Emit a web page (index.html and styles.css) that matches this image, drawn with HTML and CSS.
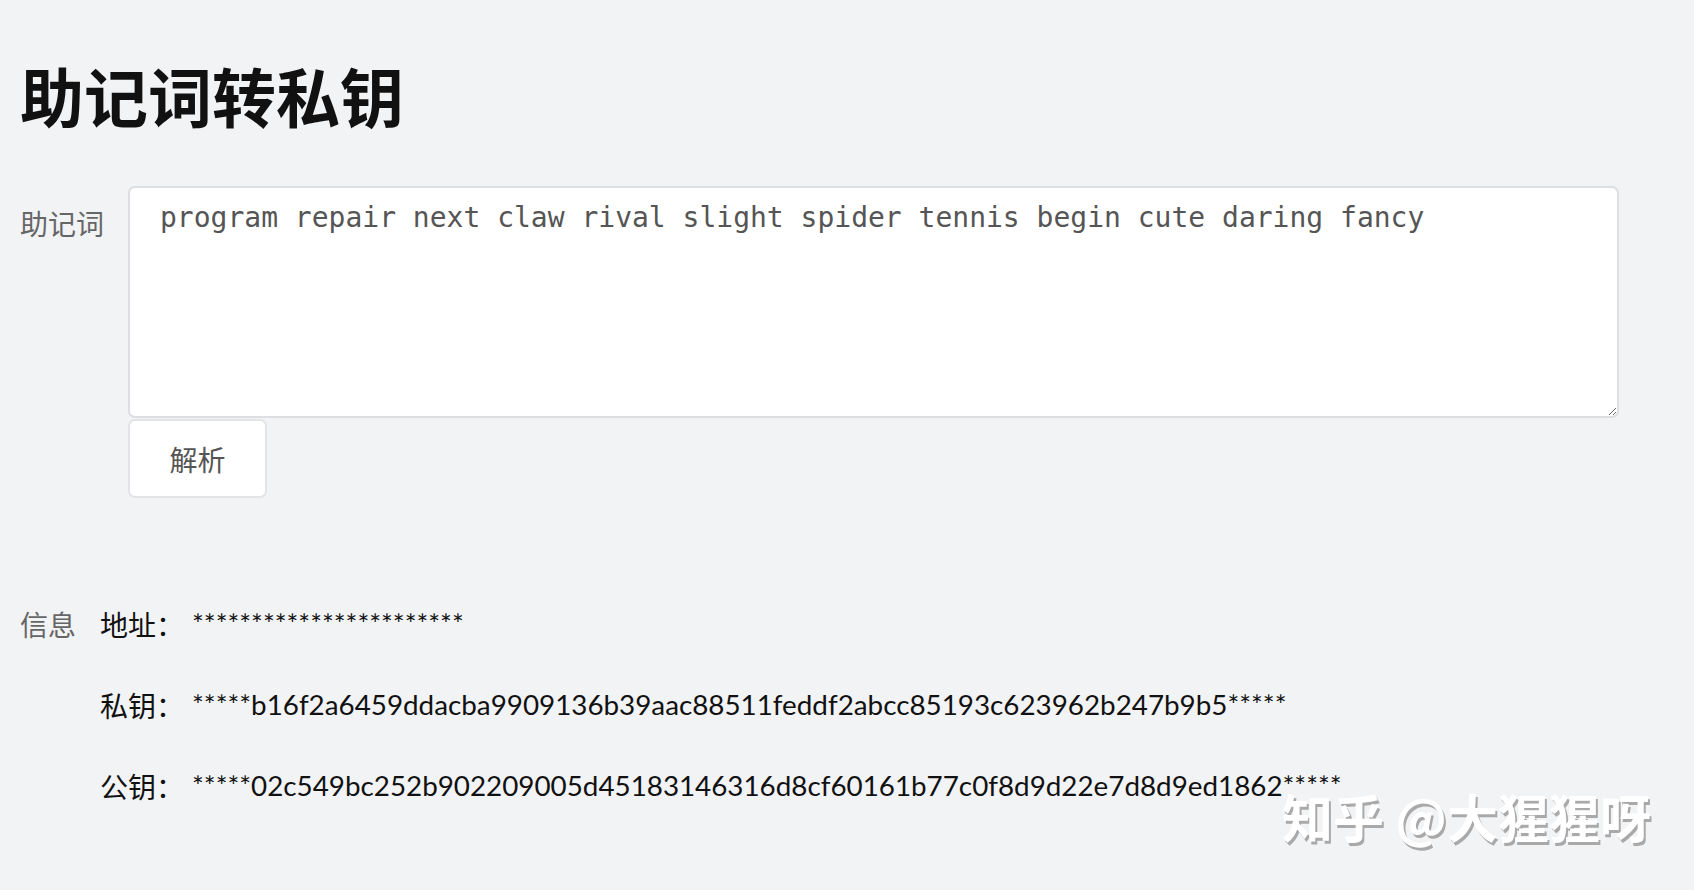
FILE: index.html
```html
<!DOCTYPE html>
<html lang="zh-CN">
<head>
<meta charset="utf-8">
<title>助记词转私钥</title>
<link rel="stylesheet" href="styles.css">
</head>
<body>
<main class="page">
  <h1 class="title">助记词转私钥</h1>
  <section class="form-row">
    <label class="form-label" for="mnemonic">助记词</label>
    <div class="form-control">
      <textarea id="mnemonic" class="mnemonic">program repair next claw rival slight spider tennis begin cute daring fancy</textarea>
      <button class="btn" type="button">解析</button>
    </div>
  </section>
  <section class="info">
    <div class="info-label">信息</div>
    <div class="info-list">
      <div class="info-row"><span class="info-key">地址：</span><span class="info-val">***********************</span></div>
      <div class="info-row"><span class="info-key">私钥：</span><span class="info-val">*****b16f2a6459ddacba9909136b39aac88511feddf2abcc85193c623962b247b9b5*****</span></div>
      <div class="info-row"><span class="info-key">公钥：</span><span class="info-val">*****02c549bc252b902209005d45183146316d8cf60161b77c0f8d9d22e7d8d9ed1862*****</span></div>
    </div>
  </section>
  <div class="watermark">知乎 @大猩猩呀</div>
</main>
</body>
</html>
```
FILE: styles.css
```css
html, body {
  margin: 0;
  padding: 0;
  background: #f2f3f5;
  height: 100%;
}
body {
  font-family: "Noto Sans CJK SC", "Noto Sans", sans-serif;
  color: #1a1a1a;
  overflow: hidden;
}
.page {
  position: relative;
  height: 100%;
  padding: 0 0 0 20px;
  box-sizing: border-box;
}
.title {
  margin: 0;
  padding-top: 55px;
  font-size: 64px;
  line-height: 78px;
  font-weight: 700;
  color: #111;
}
.form-row {
  display: flex;
  margin-top: 53px;
}
.form-label {
  width: 108px;
  flex: none;
  padding-top: 17px;
  font-size: 28px;
  line-height: 40px;
  color: #666;
}
.form-control {
  display: flex;
  flex-direction: column;
  align-items: flex-start;
}
.mnemonic {
  display: block;
  box-sizing: border-box;
  width: 1491px;
  height: 232px;
  margin: 0;
  padding: 12px 26px 11px 30px;
  border: 2px solid #dcdee2;
  border-radius: 7px;
  background: #fff;
  font-family: "DejaVu Sans Mono", monospace;
  font-size: 28px;
  line-height: 36px;
  color: #555;
  outline: none;
}
.btn {
  box-sizing: border-box;
  width: 139px;
  height: 79px;
  margin: 1px 0 0;
  border: 2px solid #e2e4e7;
  border-radius: 7px;
  background: #fff;
  font-family: "Noto Sans CJK SC", sans-serif;
  font-size: 28px;
  color: #555;
  padding: 0;
}
.info {
  display: flex;
  margin-top: 106px;
}
.info-label {
  width: 80px;
  flex: none;
  font-size: 28px;
  line-height: 40px;
  color: #666;
}
.info-list {
  display: flex;
  flex-direction: column;
  gap: 41px;
}
.info-row {
  display: flex;
  font-size: 28px;
  line-height: 40px;
  color: #111;
}
.info-key {
  width: 92px;
  flex: none;
}
.info-val {
  font-family: "Lato", "Noto Sans", sans-serif;
  font-size: 27.8px;
  white-space: nowrap;
}
.watermark {
  position: absolute;
  left: 1282px;
  top: 785px;
  font-size: 51px;
  line-height: 62px;
  font-weight: 700;
  color: #fff;
  text-shadow: 2px 3px 0 #a9a9a9;
  white-space: nowrap;
}
```
